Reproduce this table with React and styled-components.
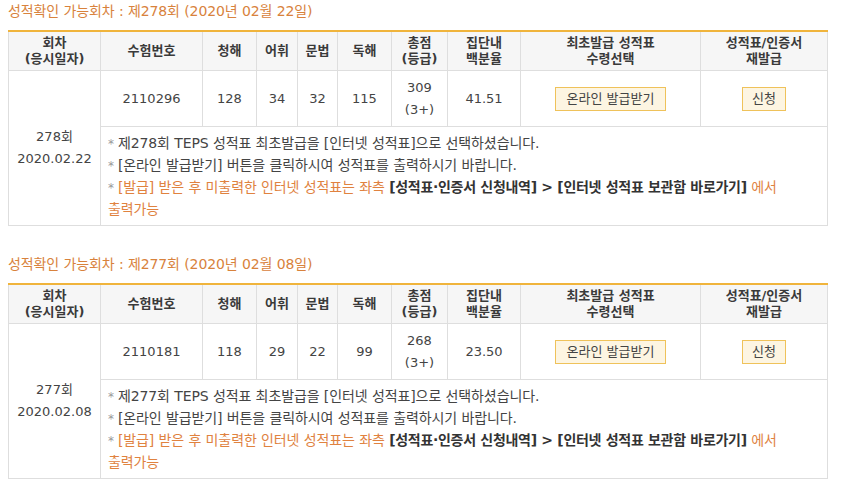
import React from "react";
import styled, { createGlobalStyle } from "styled-components";

const GlobalStyle = createGlobalStyle`
  body {
    margin: 0;
    background: #fff;
    font-family: "DejaVu Sans", "Noto Sans CJK KR", sans-serif;
  }
`;

const rounds = [
  {
    round: "278",
    title: "제278회 (2020년 02월 22일)",
    date: "2020.02.22",
    number: "2110296",
    listening: 128,
    vocab: 34,
    grammar: 32,
    reading: 115,
    total: 309,
    grade: "3+",
    percent: "41.51",
  },
  {
    round: "277",
    title: "제277회 (2020년 02월 08일)",
    date: "2020.02.08",
    number: "2110181",
    listening: 118,
    vocab: 29,
    grammar: 22,
    reading: 99,
    total: 268,
    grade: "3+",
    percent: "23.50",
  },
];

const Page = styled.div`
  padding: 0 20px 0 8px;
  display: flex;
  flex-direction: column;
  gap: 27px;
`;

const Section = styled.section`
  display: flex;
  flex-direction: column;
`;

const Title = styled.h3`
  margin: 0 0 8px;
  font-size: 14px;
  font-weight: 400;
  line-height: 22px;
  color: #d8823c;
  letter-spacing: -0.1px;
`;

const Table = styled.table`
  width: 819px;
  border-collapse: collapse;
  border-top: 2px solid #f0b43c;
  font-size: 13px;
  color: #444;
  table-layout: fixed;
`;

const Th = styled.th`
  width: ${(p) => p.$w - 1}px;
  height: 38px;
  padding: 0;
  background: #f6f6f6;
  border: 1px solid #dedede;
  border-top: none;
  font-weight: 700;
  color: #3a3a3a;
  line-height: 16px;
  text-align: center;
`;

const Td = styled.td`
  border: 1px solid #dedede;
  text-align: center;
  line-height: 22px;
  padding: 0;
  height: ${(p) => (p.$h ? `${p.$h}px` : "auto")};
`;

const NoteCell = styled.td`
  border: 1px solid #dedede;
  padding: 5px 8px 5px 7px;
  font-size: 14px;
  line-height: 22px;
  vertical-align: top;
`;

const Line = styled.div`
  color: ${(p) => (p.$accent ? "#e0823f" : "#444")};
  letter-spacing: -0.1px;
`;

const Star = styled.span`
  color: #999;
  font-size: 12px;
  line-height: 1;
  margin-right: 4px;
`;

const Strong = styled.b`
  color: #333;
  letter-spacing: -0.3px;
`;

const Button = styled.button`
  font: inherit;
  font-size: 13px;
  color: #444;
  background: #fdf5e2;
  border: 1px solid #efc25a;
  height: 24px;
  padding: 0 ${(p) => (p.$small ? 9 : 11)}px;
  line-height: 22px;
  cursor: pointer;
`;

const cols = [92, 102, 54, 41, 40, 54, 56, 73, 180, 127];

const ScoreTable = ({ r }) => (
  <Table>
    <thead>
      <tr>
        <Th $w={cols[0]}>회차<br />(응시일자)</Th>
        <Th $w={cols[1]}>수험번호</Th>
        <Th $w={cols[2]}>청해</Th>
        <Th $w={cols[3]}>어휘</Th>
        <Th $w={cols[4]}>문법</Th>
        <Th $w={cols[5]}>독해</Th>
        <Th $w={cols[6]}>총점<br />(등급)</Th>
        <Th $w={cols[7]}>집단내<br />백분율</Th>
        <Th $w={cols[8]}>최초발급 성적표<br />수령선택</Th>
        <Th $w={cols[9]}>성적표/인증서<br />재발급</Th>
      </tr>
    </thead>
    <tbody>
      <tr>
        <Td rowSpan={2}>{r.round}회<br />{r.date}</Td>
        <Td $h={55}>{r.number}</Td>
        <Td>{r.listening}</Td>
        <Td>{r.vocab}</Td>
        <Td>{r.grammar}</Td>
        <Td>{r.reading}</Td>
        <Td>{r.total}<br />({r.grade})</Td>
        <Td>{r.percent}</Td>
        <Td><Button>온라인 발급받기</Button></Td>
        <Td><Button $small>신청</Button></Td>
      </tr>
      <tr>
        <NoteCell colSpan={9}>
          <Line><Star>*</Star>제{r.round}회 TEPS 성적표 최초발급을 [인터넷 성적표]으로 선택하셨습니다.</Line>
          <Line><Star>*</Star>[온라인 발급받기] 버튼을 클릭하시여 성적표를 출력하시기 바랍니다.</Line>
          <Line $accent>
            <Star>*</Star>[발급] 받은 후 미출력한 인터넷 성적표는 좌측{" "}
            <Strong>[성적표·인증서 신청내역] &gt; [인터넷 성적표 보관함 바로가기]</Strong> 에서
            <br />출력가능
          </Line>
        </NoteCell>
      </tr>
    </tbody>
  </Table>
);

const App = () => (
  <>
    <GlobalStyle />
    <Page>
      {rounds.map((r) => (
        <Section key={r.round}>
          <Title>성적확인 가능회차 : {r.title}</Title>
          <ScoreTable r={r} />
        </Section>
      ))}
    </Page>
  </>
);

export default App;
